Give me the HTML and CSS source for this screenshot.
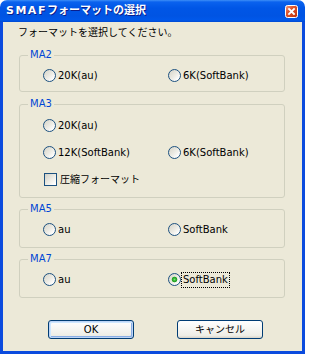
FILE: index.html
```html
<!DOCTYPE html>
<html lang="ja">
<head>
<meta charset="utf-8">
<title>SMAFフォーマットの選択</title>
<link rel="stylesheet" href="styles.css">
</head>
<body>
<div class="window">
  <div class="titlebar">
    <span class="title"><span class="title-latin">SMAF</span>フォーマットの選択</span>
    <span class="close">
      <svg width="13" height="13" viewBox="0 0 13 13">
        <defs>
          <linearGradient id="cg" x1="0" y1="0" x2="1" y2="1">
            <stop offset="0" stop-color="#F2A58D"/>
            <stop offset="0.35" stop-color="#E2582F"/>
            <stop offset="1" stop-color="#BE2F0A"/>
          </linearGradient>
        </defs>
        <rect x="0.5" y="0.5" width="12" height="12" rx="2" fill="url(#cg)" stroke="#FFFFFF"/>
        <path d="M4 4 L9 9 M9 4 L4 9" stroke="#FFFFFF" stroke-width="1.8" stroke-linecap="square"/>
      </svg>
    </span>
  </div>
  <div class="client">
    <p class="prompt">フォーマットを選択してください。</p>

    <fieldset class="group g-ma2">
      <legend>MA2</legend>
      <div class="rows">
        <div class="row">
          <span class="opt"><span class="radio"></span><span class="txt">20K(au)</span></span>
          <span class="opt"><span class="radio"></span><span class="txt">6K(SoftBank)</span></span>
        </div>
      </div>
    </fieldset>

    <fieldset class="group g-ma3">
      <legend>MA3</legend>
      <div class="rows">
        <div class="row">
          <span class="opt"><span class="radio"></span><span class="txt">20K(au)</span></span>
        </div>
        <div class="row">
          <span class="opt"><span class="radio"></span><span class="txt">12K(SoftBank)</span></span>
          <span class="opt"><span class="radio"></span><span class="txt">6K(SoftBank)</span></span>
        </div>
        <div class="row row-check">
          <span class="opt"><span class="check"></span><span class="txt txt-check">圧縮フォーマット</span></span>
        </div>
      </div>
    </fieldset>

    <fieldset class="group g-ma5">
      <legend>MA5</legend>
      <div class="rows">
        <div class="row">
          <span class="opt"><span class="radio"></span><span class="txt">au</span></span>
          <span class="opt"><span class="radio"></span><span class="txt">SoftBank</span></span>
        </div>
      </div>
    </fieldset>

    <fieldset class="group g-ma7">
      <legend>MA7</legend>
      <div class="rows">
        <div class="row">
          <span class="opt"><span class="radio"></span><span class="txt">au</span></span>
          <span class="opt"><span class="radio checked"></span><span class="txt focus">SoftBank</span></span>
        </div>
      </div>
    </fieldset>

    <div class="buttons">
      <span class="btn btn-default">OK</span>
      <span class="btn">キャンセル</span>
    </div>
  </div>
</div>
</body>
</html>
```

FILE: styles.css
```css
html, body {
  margin: 0;
  padding: 0;
  background: #FFFFFF;
}

body {
  font-family: "DejaVu Sans", "Noto Sans CJK JP", sans-serif;
  font-size: 10px;
  line-height: 12px;
  color: #000000;
}

.window {
  width: 305px;
  height: 354px;
  display: flex;
  flex-direction: column;
}

.titlebar {
  height: 22px;
  flex: none;
  display: flex;
  align-items: flex-start;
  justify-content: space-between;
  border-radius: 7px 7px 0 0;
  background: linear-gradient(to bottom, #3D8FF7 0px, #0A62EE 2px, #0056E6 8px, #0054E3 16px, #0058EA 20px, #0049D2 22px);
}

.title {
  padding: 4px 0 0 6px;
  color: #FFFFFF;
  font-weight: bold;
  font-size: 11px;
  line-height: 14px;
  text-shadow: 1px 1px 0 #0A1E8C;
}

.title-latin {
  letter-spacing: 1.5px;
}

.close {
  display: flex;
  margin: 5px 7px 0 0;
}

.client {
  flex: 1;
  background: #ECE9D8;
  border: 3px solid #0B4BDE;
  border-top: none;
  padding: 5px 0 0 15px;
  display: flex;
  flex-direction: column;
  align-items: flex-start;
}

.prompt {
  margin: 0;
  line-height: 12px;
}

.group {
  box-sizing: border-box;
  width: 266px;
  margin: 0 0 0 1px;
  padding: 0;
  border: 1px solid #D0D0BF;
  border-radius: 3px;
  min-inline-size: 0;
}

.group legend {
  margin-left: 8px;
  padding: 0 2px;
  color: #0046D5;
  line-height: 12px;
}

.g-ma2 { margin-top: 10px; }
.g-ma3 { margin-top: 6px; }
.g-ma5 { margin-top: 5px; }
.g-ma7 { margin-top: 5px; }

.rows {
  display: flex;
  flex-direction: column;
  gap: 14px;
  padding: 8px 0 11px 23px;
}

.g-ma2 .rows { padding-bottom: 9px; }
.g-ma3 .rows { padding-top: 9px; }

.row {
  display: grid;
  grid-template-columns: 125px auto;
  height: 13px;
  align-items: center;
}

.row-check {
  padding-left: 1px;
}

.opt {
  display: flex;
  align-items: center;
  white-space: nowrap;
}

.radio {
  box-sizing: border-box;
  width: 13px;
  height: 13px;
  flex: none;
  border: 1px solid #1C5180;
  border-radius: 50%;
  background: linear-gradient(135deg, #D6D4C8 0%, #ECEBE4 50%, #FFFFFF 85%);
}

.radio.checked {
  background:
    radial-gradient(circle at 50% 50%, #7FE07F 0, #3DB83D 1.2px, #21A121 2.4px, rgba(33,161,33,0) 3.2px),
    linear-gradient(135deg, #D6D4C8 0%, #ECEBE4 50%, #FFFFFF 85%);
}

.check {
  box-sizing: border-box;
  width: 13px;
  height: 13px;
  flex: none;
  border: 1px solid #1C5180;
  background: linear-gradient(135deg, #D0CFC6 0%, #ECEBE4 50%, #FFFFFF 90%);
}

.txt {
  margin-left: 2px;
  line-height: 12px;
}

.txt-check {
  margin-left: 3px;
}

.focus {
  outline: 1px dotted #000000;
  outline-offset: 1px;
}

.buttons {
  display: flex;
  gap: 43px;
  margin: 22px 0 0 30px;
}

.btn {
  box-sizing: border-box;
  width: 86px;
  height: 19px;
  display: flex;
  align-items: center;
  justify-content: center;
  border: 1px solid #003C74;
  border-radius: 3px;
  background: linear-gradient(to bottom, #FFFFFF 0%, #F7F7F4 40%, #EEEDE6 85%, #D8D3C8 100%);
  line-height: 12px;
}

.btn-default {
  box-shadow: inset 0 0 0 1px #BCD4F6, inset 1px 1px 0 1px #CEE7FF, inset -1px -1px 0 1px #89ADE4;
}
```
